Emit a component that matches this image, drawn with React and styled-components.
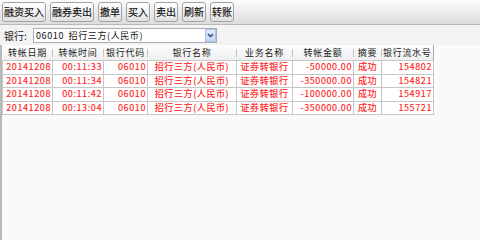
import React from "react";
import styled, { createGlobalStyle } from "styled-components";

const FONT = `"Noto Sans CJK SC", "Liberation Sans", sans-serif`;

const TOOL_BUTTONS = ["融资买入", "融券卖出", "撤单", "买入", "卖出", "刷新", "转账"];

const COLUMNS = [
  { title: "转帐日期", key: "date", width: 50, align: "right" },
  { title: "转帐时间", key: "time", width: 51, align: "right" },
  { title: "银行代码", key: "code", width: 44, align: "right" },
  { title: "银行名称", key: "bank", width: 89, align: "center" },
  { title: "业务名称", key: "biz", width: 56, align: "center" },
  { title: "转帐金额", key: "amount", width: 61, align: "right" },
  { title: "摘要", key: "memo", width: 28, align: "center" },
  { title: "银行流水号", key: "serial", width: 52, align: "right" },
];

const TRANSFERS = [
  { date: "20141208", time: "00:11:33", code: "06010", bank: "招行三方(人民币)", biz: "证券转银行", amount: "-50000.00", memo: "成功", serial: "154802" },
  { date: "20141208", time: "00:11:34", code: "06010", bank: "招行三方(人民币)", biz: "证券转银行", amount: "-350000.00", memo: "成功", serial: "154821" },
  { date: "20141208", time: "00:11:42", code: "06010", bank: "招行三方(人民币)", biz: "证券转银行", amount: "-100000.00", memo: "成功", serial: "154917" },
  { date: "20141208", time: "00:13:04", code: "06010", bank: "招行三方(人民币)", biz: "证券转银行", amount: "-350000.00", memo: "成功", serial: "155721" },
];

const GlobalStyle = createGlobalStyle`
  html, body {
    margin: 0;
    padding: 0;
    background: #fafafa;
  }
  body {
    font-family: ${FONT};
  }
`;

const Window = styled.div`
  display: flex;
  flex-direction: column;
  width: 480px;
  height: 100vh;
  background: #fafafa;
  overflow: hidden;
`;

const Toolbar = styled.div`
  display: flex;
  align-items: flex-start;
  gap: 4px;
  height: 25px;
  padding: 2px 2px 0;
  box-sizing: border-box;
  background: linear-gradient(#fbfbfb, #e9e9e9 60%, #dcdcdc);
  border-bottom: 1px solid #b9b9b9;
`;

const ToolButton = styled.button`
  height: 20px;
  padding: 0 1px;
  border: 1px solid #a3a3a3;
  border-radius: 3px;
  background: linear-gradient(#ffffff, #f1f1f1 50%, #e0e0e0);
  font-family: ${FONT};
  font-size: 10px;
  line-height: 18px;
  color: #111;
  -webkit-text-stroke: 0.15px currentColor;
  cursor: pointer;
`;

const BankBar = styled.div`
  display: flex;
  align-items: center;
  height: 20px;
  padding: 0 3px 0 4px;
  background: #f3f3f3;
`;

const BankLabel = styled.span`
  width: 29px;
  font-size: 10px;
  color: #222;
`;

const Select = styled.div`
  display: flex;
  align-items: center;
  justify-content: space-between;
  width: 184px;
  height: 15px;
  box-sizing: border-box;
  border: 1px solid #a7adb6;
  background: #fff;
`;

const SelectText = styled.span`
  padding-left: 2px;
  font-size: 9px;
  letter-spacing: 0.6px;
  word-spacing: 2px;
  line-height: 13px;
  color: #111;
  white-space: pre;
`;

const DropButton = styled.span`
  display: flex;
  align-items: center;
  justify-content: center;
  width: 11px;
  height: 13px;
  box-sizing: border-box;
  border: 1px solid #aebfe4;
  background: linear-gradient(#e4edfd, #c5d6f6);
`;

const Grid = styled.div`
  flex: 1;
  border-left: 2px solid #b9b9b9;
  background: #fafafa;
`;

const Table = styled.table`
  border-collapse: collapse;
  table-layout: fixed;
  width: 431px;
`;

const HeadCell = styled.th`
  position: relative;
  height: 15px;
  padding: 0;
  font-weight: normal;
  font-size: 9px;
  letter-spacing: 0.7px;
  line-height: 15px;
  color: #1a1a1a;
  text-align: center;
  white-space: nowrap;
  background: linear-gradient(#fdfdfd, #efefef);
  border-bottom: 1px solid #c9c9c9;
  border-right: ${(p) => (p.$last ? "1px solid #a9a9a9" : "none")};

  &::after {
    content: "";
    display: ${(p) => (p.$last ? "none" : "block")};
    position: absolute;
    right: 0;
    top: 4px;
    bottom: 3px;
    width: 1px;
    background: #c4c4c4;
  }
`;

const Cell = styled.td`
  height: 12.5px;
  padding: 0 1px;
  border: 1px solid #c6c6c6;
  background: #fff;
  color: #ff2323;
  font-size: 9px;
  letter-spacing: 0.6px;
  line-height: 12.5px;
  font-variant-numeric: tabular-nums;
  -webkit-text-stroke: 0.15px currentColor;
  text-align: ${(p) => p.$align};
  white-space: nowrap;
  overflow: hidden;
`;

const Chevron = () => (
  <svg width="7" height="5" viewBox="0 0 7 5">
    <path d="M1 1 L3.5 3.6 L6 1" fill="none" stroke="#3b4f7e" strokeWidth="1.6" />
  </svg>
);

export default function App() {
  return (
    <Window>
      <GlobalStyle />
      <Toolbar>
        {TOOL_BUTTONS.map((label) => (
          <ToolButton key={label}>{label}</ToolButton>
        ))}
      </Toolbar>
      <BankBar>
        <BankLabel>银行:</BankLabel>
        <Select>
          <SelectText>06010 招行三方(人民币)</SelectText>
          <DropButton>
            <Chevron />
          </DropButton>
        </Select>
      </BankBar>
      <Grid>
        <Table>
          <colgroup>
            {COLUMNS.map((col) => (
              <col key={col.key} style={{ width: col.width }} />
            ))}
          </colgroup>
          <thead>
            <tr>
              {COLUMNS.map((col, i) => (
                <HeadCell key={col.key} $last={i === COLUMNS.length - 1}>
                  {col.title}
                </HeadCell>
              ))}
            </tr>
          </thead>
          <tbody>
            {TRANSFERS.map((row) => (
              <tr key={row.serial}>
                {COLUMNS.map((col) => (
                  <Cell key={col.key} $align={col.align}>
                    {row[col.key]}
                  </Cell>
                ))}
              </tr>
            ))}
          </tbody>
        </Table>
      </Grid>
    </Window>
  );
}
